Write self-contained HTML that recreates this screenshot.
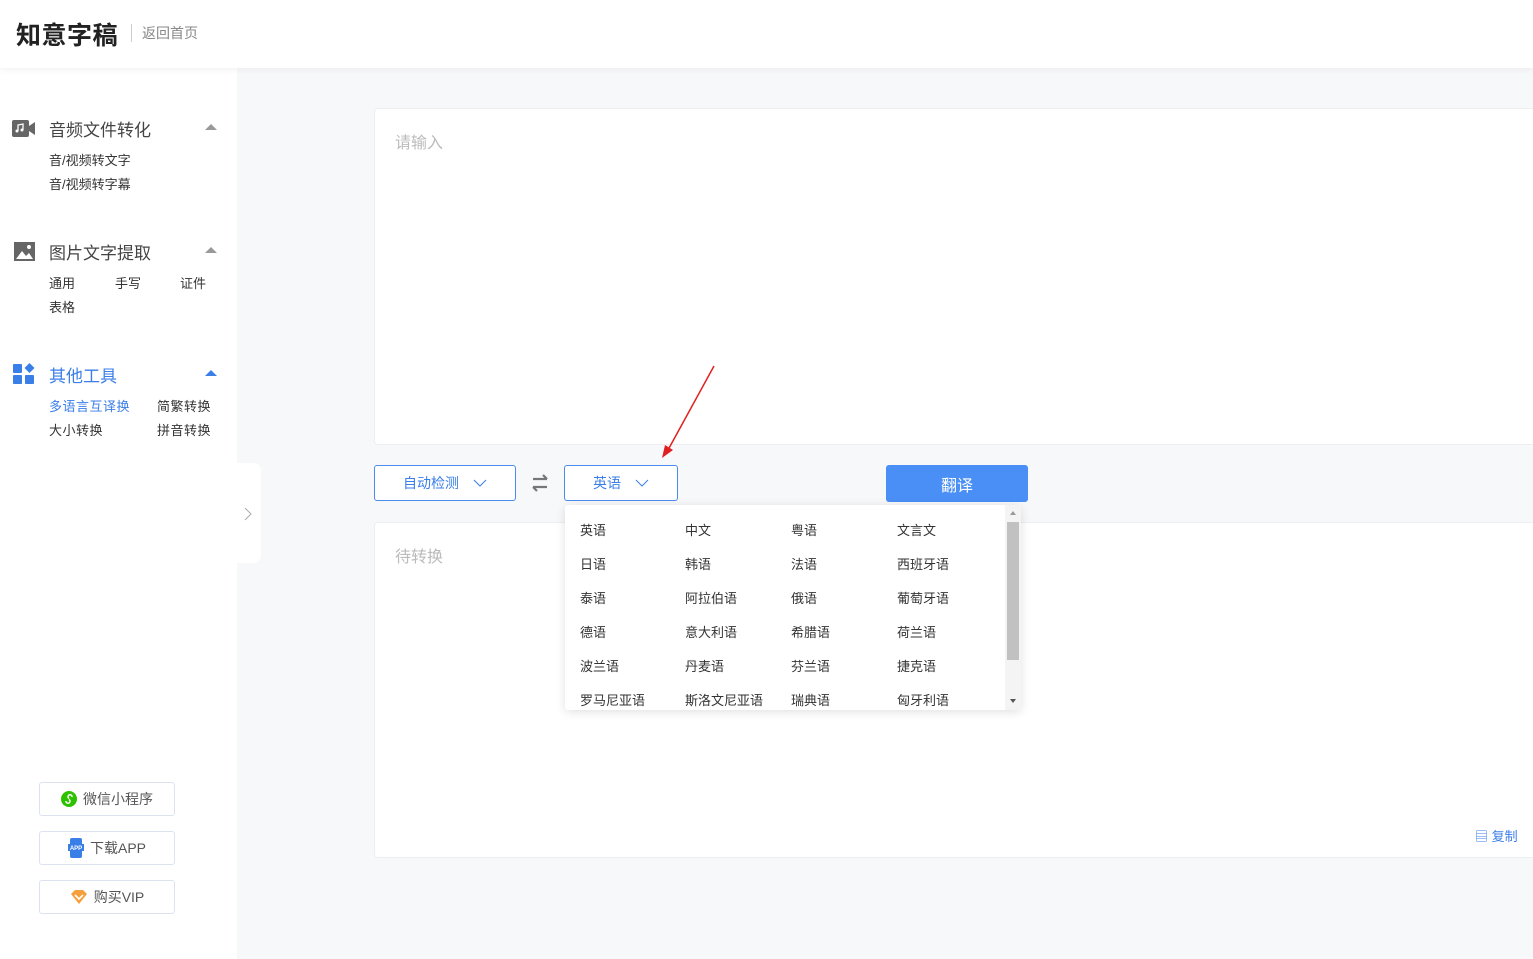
<!DOCTYPE html>
<html><head><meta charset="utf-8"><style>
*{margin:0;padding:0;box-sizing:border-box}
body{width:1533px;height:959px;overflow:hidden;background:#f7f8fa;font-family:"Liberation Sans","Noto Sans CJK SC",sans-serif;position:relative;color:#333}
.hdr{position:absolute;left:0;top:0;width:1533px;height:68px;background:#fff;box-shadow:0 2px 6px rgba(0,0,0,.05);z-index:2}
.logo{position:absolute;left:16px;top:16px;font-size:25px;font-weight:bold;color:#222;letter-spacing:0.5px}
.sep{position:absolute;left:131px;top:24px;width:1px;height:18px;background:#ccc}
.back{position:absolute;left:142px;top:23px;font-size:14px;color:#888}
.side{position:absolute;left:0;top:68px;width:237px;height:891px;background:#fff}
.a{position:absolute;font-size:17px;color:#444}
.s{position:absolute;font-size:13px;color:#333}
.tri{position:absolute;left:205px;width:0;height:0;border-left:6px solid transparent;border-right:6px solid transparent;border-bottom:6px solid #999}
.btn{position:absolute;left:39px;width:136px;height:34px;border:1px solid #dde3ee;border-radius:3px;background:#fff;font-size:14px;color:#555;display:flex;align-items:center;justify-content:center;gap:6px}
.box{position:absolute;left:374px;width:1170px;background:#fff;border:1px solid #eceef2;border-radius:4px}
.ph{position:absolute;left:20px;top:20px;font-size:16px;color:#bbb}
.sel{position:absolute;top:465px;height:36px;border:1px solid #4a8cf0;border-radius:3px;background:#fff;color:#3a7ee8;font-size:14px;display:flex;align-items:center;justify-content:center;gap:14px}
.dd{position:absolute;left:565px;top:505px;width:456px;height:205px;background:#fff;box-shadow:0 2px 10px rgba(0,0,0,.12);border-radius:3px;overflow:hidden}
.dd span{position:absolute;font-size:13px;color:#333}
</style></head><body>
<div class="hdr"><div class="logo">知意字稿</div><div class="sep"></div><div class="back">返回首页</div></div>
<div class="side">
<svg style="position:absolute;left:12px;top:52px" width="24" height="17"><rect x="0" y="0" width="17" height="17" rx="2" fill="#666"/><path d="M17 6l6-4v13l-6-4z" fill="#666"/><path d="M6 11V5l5-1v6" stroke="#fff" stroke-width="1.3" fill="none"/><circle cx="5" cy="11" r="1.5" fill="#fff"/><circle cx="10" cy="10" r="1.5" fill="#fff"/></svg>
<div class="a" style="left:49px;top:48px">音频文件转化</div><div class="tri" style="top:56px"></div>
<div class="s" style="left:49px;top:82px">音/视频转文字</div>
<div class="s" style="left:49px;top:106px">音/视频转字幕</div>
<svg style="position:absolute;left:14px;top:174px" width="21" height="19"><rect width="21" height="19" fill="#666"/><path d="M2 17l6-8 4 5 3-3 4 6z" fill="#fff"/><circle cx="15" cy="5" r="2" fill="#fff"/></svg>
<div class="a" style="left:49px;top:171px">图片文字提取</div><div class="tri" style="top:179px"></div>
<div class="s" style="left:49px;top:205px">通用</div><div class="s" style="left:115px;top:205px">手写</div><div class="s" style="left:180px;top:205px">证件</div>
<div class="s" style="left:49px;top:229px">表格</div>
<svg style="position:absolute;left:13px;top:295px" width="22" height="22"><rect x="0" y="1" width="9" height="9" rx="1" fill="#3a7ee8"/><rect x="0" y="12" width="9" height="9" rx="1" fill="#3a7ee8"/><rect x="12" y="12" width="9" height="9" rx="1" fill="#3a7ee8"/><path d="M16.5 0l5 5-5 5-5-5z" fill="#3a7ee8"/></svg>
<div class="a" style="left:49px;top:294px;color:#3a7ee8">其他工具</div><div class="tri" style="top:302px;border-bottom-color:#3a7ee8"></div>
<div class="s" style="left:49px;top:328px;color:#3a7ee8;letter-spacing:0.5px">多语言互译换</div><div class="s" style="left:157px;top:328px;letter-spacing:0.5px">简繁转换</div>
<div class="s" style="left:49px;top:352px;letter-spacing:0.5px">大小转换</div><div class="s" style="left:157px;top:352px;letter-spacing:0.5px">拼音转换</div>
<div class="btn" style="top:714px"><svg width="16" height="16"><circle cx="8" cy="8" r="8" fill="#2dc100"/><path d="M5 10a2 2 0 1 0 3-1.5M11 6a2 2 0 1 0-3 1.5" stroke="#fff" stroke-width="1.4" fill="none"/></svg>微信小程序</div>
<div class="btn" style="top:763px"><svg width="16" height="20"><rect x="2" y="0" width="12" height="20" rx="2" fill="#3a7ee8"/><rect x="0" y="6" width="16" height="7" fill="#3a7ee8"/><text x="8" y="12" font-size="6" fill="#fff" text-anchor="middle" font-family="Liberation Sans" font-weight="bold">APP</text></svg>下载APP</div>
<div class="btn" style="top:812px"><svg width="18" height="15"><path d="M1 4l4-4h8l4 4-8 10z" fill="#f5a03c"/><path d="M5 5l4 4 4-4" stroke="#fff" stroke-width="1.6" fill="none"/></svg>购买VIP</div>
</div>
<div style="position:absolute;left:237px;top:463px;width:24px;height:100px;background:#fff;border-radius:0 8px 8px 0"><svg style="position:absolute;left:7px;top:44px" width="8" height="14"><path d="M1 1l6 6-6 6" stroke="#aaa" fill="none"/></svg></div>
<div class="box" style="top:108px;height:337px"><div class="ph">请输入</div></div>
<div class="box" style="top:522px;height:336px"><div class="ph">待转换</div>
<div style="position:absolute;left:1100px;top:303px;font-size:13px;color:#3a7ee8">▤ 复制</div></div>
<svg style="position:absolute;left:0;top:0" width="1533" height="959"><path d="M714 366L668 450" stroke="#e02020" stroke-width="1.5"/><path d="M662 458l3-13 8 5z" fill="#e02020"/></svg>
<div class="sel" style="left:374px;width:142px">自动检测<svg width="14" height="8"><path d="M1 1l6 6 6-6" stroke="#3a7ee8" fill="none"/></svg></div>
<svg style="position:absolute;left:530px;top:474px" width="20" height="18"><path d="M3 5h14M13 1l4 4M17 13H3M7 17l-4-4" stroke="#777" stroke-width="2.2" fill="none"/></svg>
<div class="sel" style="left:564px;width:114px">英语<svg width="14" height="8"><path d="M1 1l6 6 6-6" stroke="#3a7ee8" fill="none"/></svg></div>
<div style="position:absolute;left:886px;top:465px;width:142px;height:37px;background:#4a8ff5;border-radius:3px;color:#fff;font-size:16px;display:flex;align-items:center;justify-content:center">翻译</div>
<div class="dd">
<span style="left:15px;top:15px">英语</span><span style="left:120px;top:15px">中文</span><span style="left:226px;top:15px">粤语</span><span style="left:332px;top:15px">文言文</span>
<span style="left:15px;top:49px">日语</span><span style="left:120px;top:49px">韩语</span><span style="left:226px;top:49px">法语</span><span style="left:332px;top:49px">西班牙语</span>
<span style="left:15px;top:83px">泰语</span><span style="left:120px;top:83px">阿拉伯语</span><span style="left:226px;top:83px">俄语</span><span style="left:332px;top:83px">葡萄牙语</span>
<span style="left:15px;top:117px">德语</span><span style="left:120px;top:117px">意大利语</span><span style="left:226px;top:117px">希腊语</span><span style="left:332px;top:117px">荷兰语</span>
<span style="left:15px;top:151px">波兰语</span><span style="left:120px;top:151px">丹麦语</span><span style="left:226px;top:151px">芬兰语</span><span style="left:332px;top:151px">捷克语</span>
<span style="left:15px;top:185px">罗马尼亚语</span><span style="left:120px;top:185px">斯洛文尼亚语</span><span style="left:226px;top:185px">瑞典语</span><span style="left:332px;top:185px">匈牙利语</span>
<div style="position:absolute;left:440px;top:0;width:16px;height:205px;background:#f4f4f4"></div>
<div style="position:absolute;left:442px;top:17px;width:12px;height:138px;background:#c1c1c1"></div>
<div style="position:absolute;left:445px;top:6px;border:3px solid transparent;border-bottom:4px solid #999;border-top:0"></div>
<div style="position:absolute;left:445px;top:194px;border:3px solid transparent;border-top:4px solid #555;border-bottom:0"></div>
</div>
</body></html>
